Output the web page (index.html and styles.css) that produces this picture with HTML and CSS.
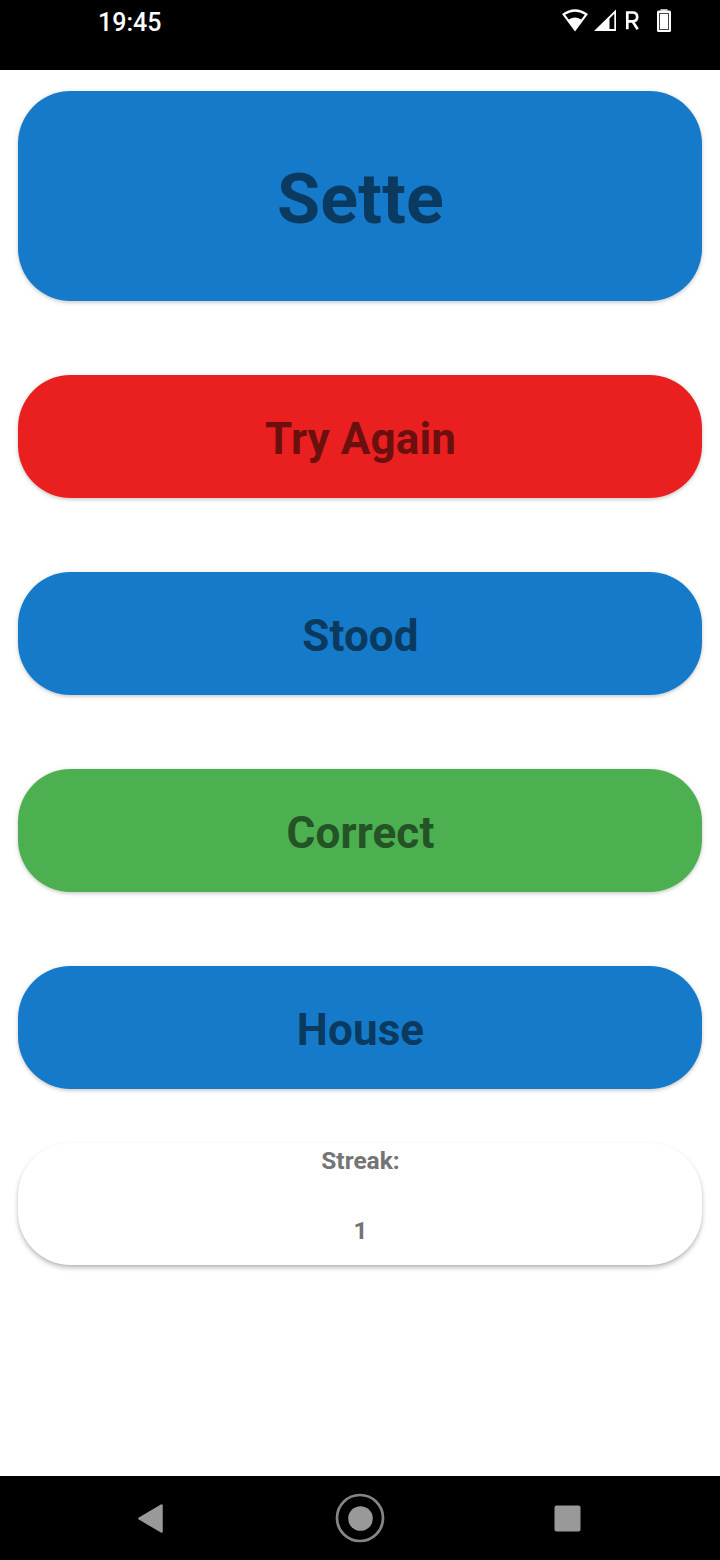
FILE: index.html
```html
<!DOCTYPE html>
<html lang="en">
<head>
<meta charset="utf-8">
<title>Sette</title>
<link rel="stylesheet" href="styles.css">
</head>
<body>
<div class="screen">
  <header class="status">
    <span class="clock">19:45</span>
    <svg class="status-icons" width="112" height="34" viewBox="0 0 112 34" fill="#fff">
      <path fill-rule="evenodd" d="M2 14Q15 4.600 28 14L15 31.500ZM5.200 14.800L8.800 19.500Q15 15.500 21.200 19.500L24.800 14.800Q15 8.800 5.200 14.800Z"/>
      <path fill-rule="evenodd" d="M34 31L56 9.500V31ZM49.500 18.500V29H54.300V13.700Z"/>
      <path d="M67.300 29.200V12.500H72.500Q77.200 12.500 77.200 17Q77.200 21.300 72.500 21.300H67.300M72.500 21.300L77.700 29.200" fill="none" stroke="#fff" stroke-width="2.700"/>
      <rect x="100.500" y="9" width="7" height="3" fill="#bbb"/>
      <rect x="97" y="10.500" width="14" height="21.500" rx="1.500"/>
      <rect x="99.500" y="13.500" width="9" height="16" fill="none" stroke="#444" stroke-width="1"/>
    </svg>
  </header>
  <main class="cards">
    <section class="card prompt">Sette</section>
    <button class="card answer wrong">Try Again</button>
    <button class="card answer">Stood</button>
    <button class="card answer right">Correct</button>
    <button class="card answer">House</button>
    <section class="card streak"><span>Streak:</span><span>1</span></section>
  </main>
  <nav class="navbar">
    <svg width="720" height="84" viewBox="0 0 720 84" fill="#999">
      <path d="M139.500 42.500L161.500 29.500V55.500Z" stroke="#999" stroke-width="2.500" stroke-linejoin="round"/>
      <circle cx="360" cy="42" r="23" fill="none" stroke="#858585" stroke-width="2.700"/>
      <circle cx="360.500" cy="42.500" r="12.300"/>
      <rect x="554.500" y="29.500" width="26" height="26" rx="2"/>
    </svg>
  </nav>
</div>
</body>
</html>
```
FILE: styles.css
```css
body {
  margin: 0;
  background: #fff;
  font-family: Roboto, sans-serif;
}

.screen {
  display: flex;
  flex-direction: column;
  width: 720px;
  height: 1560px;
  overflow: hidden;
}

.status {
  display: flex;
  justify-content: space-between;
  align-items: flex-start;
  box-sizing: border-box;
  height: 70px;
  padding: 0 48px 0 98px;
  background: #000;
  color: #fff;
}

.clock {
  padding-top: 8px;
  font-size: 25px;
  font-weight: 500;
  line-height: 30px;
}

.cards {
  display: flex;
  flex: 1;
  flex-direction: column;
  gap: 74px;
  padding: 21px 18px 0;
}

.card {
  display: flex;
  flex: none;
  align-items: center;
  justify-content: center;
  box-sizing: border-box;
  height: 123px;
  margin: 0;
  padding: 0 0 0 1px;
  border: 0;
  border-radius: 52.5px;
  background: #167acb;
  box-shadow: 0 1px 5px rgba(0, 0, 0, 0.16), 0 2px 3px rgba(0, 0, 0, 0.08);
  color: #0a3a5f;
  font-family: inherit;
  font-weight: 660;
}

.prompt {
  height: 210px;
  padding-top: 5px;
  font-size: 70px;
  letter-spacing: 0.2px;
}

.answer {
  padding-top: 4px;
  font-size: 44px;
  letter-spacing: 0.12px;
}

.wrong {
  background: #ea2020;
  color: #6b0f0f;
}

.right {
  background: #4caf50;
  color: #245326;
}

.streak {
  flex-direction: column;
  justify-content: flex-start;
  gap: 40px;
  height: 122px;
  margin-top: -20px;
  padding-top: 3px;
  background: #fff;
  box-shadow: 0 3px 5px rgba(0, 0, 0, 0.24), 0 1px 2px rgba(0, 0, 0, 0.08);
  color: #747474;
  font-size: 24.5px;
  line-height: 30px;
}

.navbar {
  height: 84px;
  background: #000;
}

.navbar svg {
  display: block;
}
```
